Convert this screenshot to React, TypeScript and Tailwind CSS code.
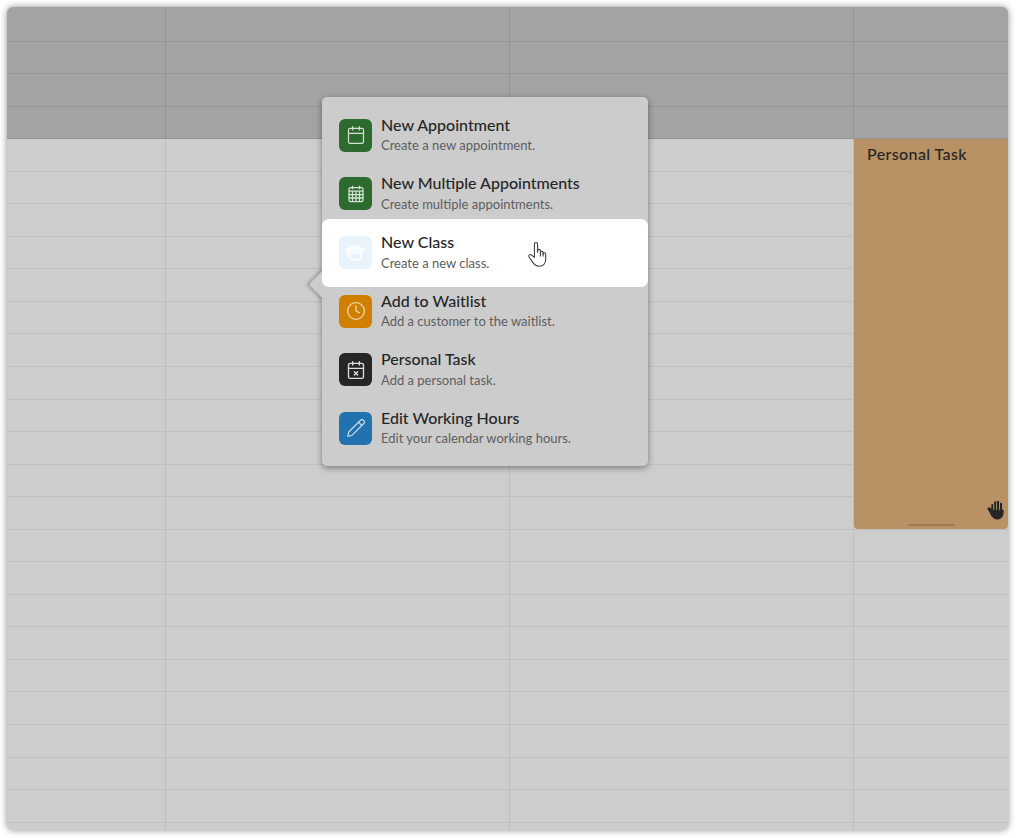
import React from "react";
import { Calendar, CalendarX, Clock, Pencil } from "lucide-react";

const GridCal = () => (
  <svg width="20" height="20" viewBox="0 0 20 20" fill="none" stroke="currentColor" strokeWidth="1.3">
    <rect x="3" y="3.6" width="14" height="14" rx="1.6" />
    <path d="M6.5 1.8v3.4M13.5 1.8v3.4M3 7.2h14M3 10.6h14M3 14h14M6.5 7.2v10.4M10 7.2v10.4M13.5 7.2v10.4" />
  </svg>
);

const Cap = () => (
  <svg width="23" height="23" viewBox="0 0 23 23" fill="none" stroke="currentColor" strokeWidth="1.5" strokeLinejoin="round" strokeLinecap="round">
    <path d="M2.2 8.6 11.5 4.6l9.3 4-9.3 4z" fill="currentColor" fillOpacity="0.55" />
    <path d="M6 11v5.6c0 1.2 2.6 2.3 5.500 2.300s5.500-1.100 5.500-2.300V11" />
    <path d="M3.200 9.400v6.200" />
  </svg>
);

const PointerHand = () => (
  <svg width="24" height="28" viewBox="0 0 24 28" fill="#ffffff" stroke="#3a3a3a" strokeWidth="1.05" strokeLinejoin="round" strokeLinecap="round">
    <path d="M7.400 17.400V4.200c0-2.300 3.200-2.300 3.200 0v8.100l0-1.600c0-1.800 2.800-1.800 2.800 0v1.800c0-1.700 2.700-1.700 2.700 0v1.500c0-1.600 2.600-1.600 2.600 0v5.600c0 4-2.600 6.600-6.400 6.600-3.200 0-5-1.400-6.500-3.800l-3.600-5.200c-1.200-1.800.9-3.500 2.500-2.100z" />
    <path d="M13.400 12.500v3.400M16.100 13.200v2.900" />
  </svg>
);

const DarkHand = () => (
  <svg width="18" height="20" viewBox="0 0 18 20" fill="#262626" stroke="#262626" strokeLinecap="round">
    <path d="M4.600 9.500c-1-1.200-2.700-2.300-3.500-1.300-.7.900 1 2.400 2 4.400 1 2.400 2.600 6.400 7 6.400 4.400 0 6-3 6-6.500V10H4.600z" strokeWidth="1" />
    <path d="M5.300 10.500V5M8.200 10V2.300M11 10V1.800M14 10.500V3.800" strokeWidth="2.100" />
    <path d="M6.750 6v4M9.600 4v6M12.500 4v6" stroke="#b89264" strokeWidth="0.500" />
  </svg>
);

const items = [
  { title: "New Appointment", sub: "Create a new appointment.", bg: "bg-[#2d6a2e]", fg: "text-[#d5e2d5]", icon: <Calendar size={20} strokeWidth={1.4} /> },
  { title: "New Multiple Appointments", sub: "Create multiple appointments.", bg: "bg-[#2d6a2e]", fg: "text-[#d5e2d5]", icon: <GridCal /> },
  { title: "New Class", sub: "Create a new class.", bg: "bg-[#e8f3fb]", fg: "text-white", icon: <Cap />, active: true },
  { title: "Add to Waitlist", sub: "Add a customer to the waitlist.", bg: "bg-[#cf8000]", fg: "text-[#f0d7ae]", icon: <Clock size={20} strokeWidth={1.6} /> },
  { title: "Personal Task", sub: "Add a personal task.", bg: "bg-[#262626]", fg: "text-[#dedede]", icon: <CalendarX size={20} strokeWidth={1.6} /> },
  { title: "Edit Working Hours", sub: "Edit your calendar working hours.", bg: "bg-[#2272b0]", fg: "text-[#cfe1ee]", icon: <Pencil size={20} strokeWidth={1.4} /> },
];

const rows = Array.from({ length: 26 }, (_, i) => i);

export default function App() {
  return (
    <div className="h-[838px] w-[1016px] overflow-hidden bg-white pl-[7px] pr-2 pt-[7px] font-['Lato','Noto_Sans',sans-serif]">
      <div className="relative h-[823px] w-[1001px] overflow-hidden rounded-md bg-[#cdcdcd] shadow-[0_0_7px_rgba(0,0,0,0.45)]">
        <div className="h-[2px] bg-[#a3a3a3]" />
        {rows.map((i) => (
          <div
            key={i}
            className={
              i < 4
                ? "grid h-[32.55px] grid-cols-[159px_344px_344px_1fr] border-b border-[#949494] bg-[#a3a3a3]"
                : "grid h-[32.55px] grid-cols-[159px_344px_344px_1fr] border-b border-[#bfbfbf]"
            }
          >
            <div className={i < 4 ? "border-r border-[#949494]" : "border-r border-[#bfbfbf]"} />
            <div className={i < 4 ? "border-r border-[#949494]" : "border-r border-[#bfbfbf]"} />
            <div className={i < 4 ? "border-r border-[#949494]" : "border-r border-[#bfbfbf]"} />
            <div />
          </div>
        ))}

        <div className="absolute left-[847px] top-[132px] h-[390px] w-[154px] rounded-b-[4px] bg-[#b89264]">
          <div className="pl-[13px] pt-[5px] text-[16px] font-medium leading-5 tracking-[0.4px] text-[#262626]">Personal Task</div>
          <div className="absolute bottom-[3px] left-[54px] h-[2px] w-[47px] rounded bg-[#9c7b53]" />
          <div className="absolute bottom-[9px] right-[3px]">
            <DarkHand />
          </div>
        </div>

        <div className="absolute left-[315px] top-[90px] w-[326px] rounded-[5px] bg-[#cccccc] pb-[8px] pt-[9px] shadow-[0_2px_6px_rgba(0,0,0,0.4)]">
          <div className="absolute left-[-9px] top-[177px] h-[21px] w-[21px] rotate-45 rounded-[3px] bg-[#cccccc] shadow-[-2px_2px_3px_rgba(0,0,0,0.22)]" />
          {items.map((it) => (
            <div
              key={it.title}
              className={
                it.active
                  ? "relative z-10 -my-[4.7px] flex h-[68px] items-center gap-[9px] rounded-[7px] bg-white pl-[17px]"
                  : "relative flex h-[58.6px] items-center gap-[9px] pl-[17px]"
              }
            >
              <div className={`flex h-[33px] w-[33px] shrink-0 items-center justify-center rounded-[6px] ${it.bg} ${it.fg}`}>
                {it.icon}
              </div>
              <div className="pb-[1.5px]">
                <div className="mb-[1.500px] text-[16px] font-medium leading-[21px] text-[#262626]">{it.title}</div>
                <div className="text-[13px] leading-[19px] text-[#5e5e5e]">{it.sub}</div>
              </div>
              {it.active && (
                <div className="absolute left-[205px] top-[21px]">
                  <PointerHand />
                </div>
              )}
            </div>
          ))}
        </div>
      </div>
    </div>
  );
}
